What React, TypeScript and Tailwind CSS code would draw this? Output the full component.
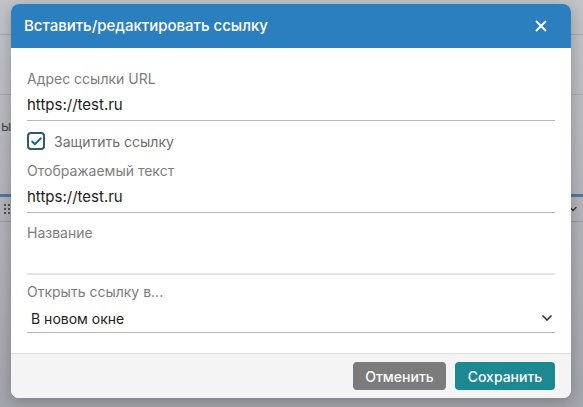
import { X, ChevronDown, Check } from 'lucide-react';

function Field({ label, value, faint }: { label: string; value?: string; faint?: boolean }) {
  return (
    <div>
      <div className="h-[20px] leading-[20px] text-[14px] text-[#7d7d7d]">{label}</div>
      <div
        className={
          faint
            ? 'h-[32px] border-b-2 border-[#e3e3e3] flex items-center pt-[2px] text-[15px] text-[#222]'
            : 'h-[32px] border-b border-[#b8b8b8] flex items-center pt-[2px] text-[15px] text-[#222]'
        }
      >
        {value}
      </div>
    </div>
  );
}

export default function App() {
  return (
    <div
      className="relative w-[583px] h-[407px] overflow-hidden bg-[#b7b9be]"
      style={{ fontFamily: 'Inter, "Noto Sans", sans-serif' }}
    >
      {/* page behind the modal */}
      <div className="flex flex-col h-full bg-gradient-to-b from-[#c3c4c9] to-[#a4a6ad]">
        <div className="h-[35px] border-b border-[#a9abb1]" />
        <div className="h-[60px] border-b border-[#a9abb1]" />
        <div className="h-[60px] flex items-center text-[14px] text-[#4a4b50] pl-[1px]">ы</div>
        <div className="h-[39px]" />
        <div className="h-[3px] bg-[#5177a2]" />
        <div className="h-[25px] flex items-center justify-between px-[4px] border-b border-[#9a9ca2]">
          <div className="grid grid-cols-2 gap-x-[2px] gap-y-[2px]">
            <span className="w-[2px] h-[2px] bg-[#333] rounded-full" />
            <span className="w-[2px] h-[2px] bg-[#333] rounded-full" />
            <span className="w-[2px] h-[2px] bg-[#333] rounded-full" />
            <span className="w-[2px] h-[2px] bg-[#333] rounded-full" />
            <span className="w-[2px] h-[2px] bg-[#333] rounded-full" />
            <span className="w-[2px] h-[2px] bg-[#333] rounded-full" />
          </div>
          <ChevronDown className="w-[12px] h-[12px] text-[#333]" strokeWidth={2.5} />
        </div>
      </div>

      {/* modal */}
      <div className="absolute left-[11px] top-[4px] w-[560px] h-[394px] rounded-[8px] overflow-hidden bg-white shadow-[0_4px_16px_rgba(0,0,0,0.25)] flex flex-col">
        <div className="h-[44px] shrink-0 bg-[#2b7fbf] flex items-center justify-between pl-[13px] pr-[21px]">
          <span className="text-white text-[15px] font-medium">Вставить/редактировать ссылку</span>
          <X className="w-[18px] h-[18px] text-white" strokeWidth={2.5} />
        </div>

        <div className="flex-1 px-[16px] pt-[21px]">
          <Field label="Адрес ссылки URL" value="https://test.ru" />
          <label className="h-[40px] flex items-center gap-[9px]">
            <span className="w-[18px] h-[18px] rounded-[4px] border-2 border-[#32586b] flex items-center justify-center">
              <Check className="w-[13px] h-[13px] text-[#1f6580]" strokeWidth={3.5} />
            </span>
            <span className="text-[14px] text-[#6f6f6f]">Защитить ссылку</span>
          </label>
          <Field label="Отображаемый текст" value="https://test.ru" />
          <div className="h-[10px]" />
          <Field label="Название" faint />
          <div className="h-[7px]" />
          <div>
            <div className="h-[20px] leading-[20px] text-[14px] text-[#7d7d7d]">Открыть ссылку в...</div>
            <div className="h-[31px] border-b border-[#b8b8b8] flex items-center justify-between pl-[4px] pr-0 pt-[2px] text-[14px] text-[#222]">
              <span>В новом окне</span>
              <ChevronDown className="w-[16px] h-[16px] text-[#333]" strokeWidth={2.5} />
            </div>
          </div>
        </div>

        <div className="h-[45px] shrink-0 border-t border-[#dedede] bg-[#f4f4f4] flex items-center justify-end gap-[9px] pr-[16px]">
          <button className="h-[28px] w-[93px] rounded-[4px] bg-[#7b7b7b] text-white text-[14px] font-medium">
            Отменить
          </button>
          <button className="h-[28px] w-[100px] rounded-[4px] bg-[#1b8892] text-white text-[14px] font-medium">
            Сохранить
          </button>
        </div>
      </div>
    </div>
  );
}
